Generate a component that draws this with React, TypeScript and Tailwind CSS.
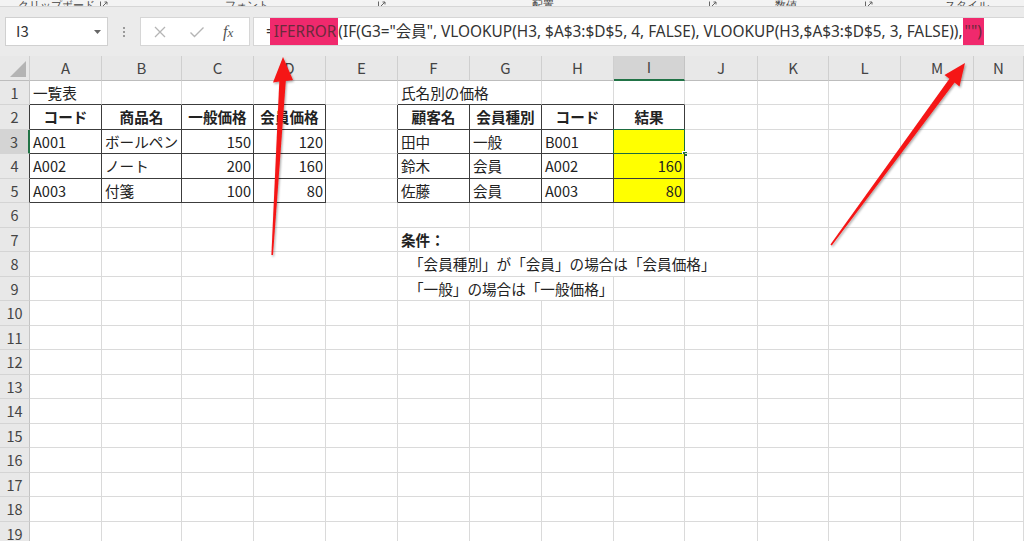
import React from "react";

const COLS = ["A", "B", "C", "D", "E", "F", "G", "H", "I", "J", "K", "L", "M", "N"];
const ROWS = Array.from({ length: 19 }, (_, i) => i + 1);

interface Cell {
  text?: string;
  align?: "left" | "center" | "right";
  bold?: boolean;
  fill?: boolean;
  span?: number;
  indent?: boolean;
  selected?: boolean;
}

const cells: Record<string, Cell> = {
  A1: { text: "一覧表" },
  A2: { text: "コード", bold: true, align: "center" },
  B2: { text: "商品名", bold: true, align: "center" },
  C2: { text: "一般価格", bold: true, align: "center" },
  D2: { text: "会員価格", bold: true, align: "center" },
  A3: { text: "A001" },
  B3: { text: "ボールペン" },
  C3: { text: "150", align: "right" },
  D3: { text: "120", align: "right" },
  A4: { text: "A002" },
  B4: { text: "ノート" },
  C4: { text: "200", align: "right" },
  D4: { text: "160", align: "right" },
  A5: { text: "A003" },
  B5: { text: "付箋" },
  C5: { text: "100", align: "right" },
  D5: { text: "80", align: "right" },
  F1: { text: "氏名別の価格", span: 2 },
  F2: { text: "顧客名", bold: true, align: "center" },
  G2: { text: "会員種別", bold: true, align: "center" },
  H2: { text: "コード", bold: true, align: "center" },
  I2: { text: "結果", bold: true, align: "center" },
  F3: { text: "田中" },
  G3: { text: "一般" },
  H3: { text: "B001" },
  I3: { text: "", fill: true, selected: true },
  F4: { text: "鈴木" },
  G4: { text: "会員" },
  H4: { text: "A002" },
  I4: { text: "160", align: "right", fill: true },
  F5: { text: "佐藤" },
  G5: { text: "会員" },
  H5: { text: "A003" },
  I5: { text: "80", align: "right", fill: true },
  F7: { text: "条件：", bold: true },
  F8: { text: "「会員種別」が「会員」の場合は「会員価格」", span: 5, indent: true },
  F9: { text: "「一般」の場合は「一般価格」", span: 3, indent: true },
};

const spanClass: Record<number, string> = {
  1: "",
  2: "col-span-2",
  3: "col-span-3",
  5: "col-span-5",
};

// A2:D5 and F2:I5 have dark borders
const inTable = (c: number, r: number) =>
  r >= 2 && r <= 5 && ((c >= 0 && c <= 3) || (c >= 5 && c <= 8));

const cellFont = "font-['Noto_Sans_CJK_JP','Noto_Sans',sans-serif]";

const Launcher = () => (
  <svg width="8" height="8" viewBox="0 0 8 8" className="block">
    <path d="M0.5 0.5 V7.5 H7.5" fill="none" stroke="#666" strokeWidth="1" />
    <path d="M3 5 L7 1 M4.5 1 H7 V3.5" fill="none" stroke="#666" strokeWidth="1" />
  </svg>
);

const RibbonLabels = () => {
  const seg = "shrink-0 flex items-end h-full overflow-visible";
  return (
    <div className="h-[7px] bg-[#f3f3f3] border-b border-[#d6d6d6] overflow-hidden flex text-[11px] leading-[11px] text-[#444]">
      <div className={`${seg} w-[18px]`} />
      <div className={`${seg} w-[82px]`}>
        <span className="mb-[-4px] whitespace-nowrap">クリップボード</span>
      </div>
      <div className={`${seg} w-[125px]`}>
        <span className="mb-[-3px]"><Launcher /></span>
      </div>
      <div className={`${seg} w-[153px]`}>
        <span className="mb-[-4px] whitespace-nowrap">フォント</span>
      </div>
      <div className={`${seg} w-[154px]`}>
        <span className="mb-[-3px]"><Launcher /></span>
      </div>
      <div className={`${seg} w-[177px]`}>
        <span className="mb-[-4px] whitespace-nowrap">配置</span>
      </div>
      <div className={`${seg} w-[66px]`}>
        <span className="mb-[-3px]"><Launcher /></span>
      </div>
      <div className={`${seg} w-[90px]`}>
        <span className="mb-[-4px] whitespace-nowrap">数値</span>
      </div>
      <div className={`${seg} w-[80px]`}>
        <span className="mb-[-3px]"><Launcher /></span>
      </div>
      <div className={`${seg} w-[79px]`}>
        <span className="mb-[-4px] whitespace-nowrap">スタイル</span>
      </div>
    </div>
  );
};

const FormulaBar = () => (
  <div className="h-[49px] bg-[#ebebeb] flex items-start pt-[10px]">
    <div className="ml-[5px] w-[103px] h-[29px] bg-white border border-[#d0d0d0] flex items-center justify-between pl-[10px] pr-[6px]">
      <span className={`${cellFont} text-[15px] text-[#333]`}>I3</span>
      <svg width="7" height="4" viewBox="0 0 7 4">
        <path d="M0 0 H7 L3.5 4 Z" fill="#666" />
      </svg>
    </div>
    <div className="w-[32px] h-[29px] flex items-center justify-center">
      <div className="flex flex-col gap-[2px]">
        <span className="w-[2px] h-[2px] bg-[#9a9a9a]" />
        <span className="w-[2px] h-[2px] bg-[#9a9a9a]" />
        <span className="w-[2px] h-[2px] bg-[#9a9a9a]" />
      </div>
    </div>
    <div className="w-[110px] h-[29px] bg-white border border-[#d6d6d6] flex items-center">
      <svg width="14" height="14" viewBox="0 0 14 14" className="ml-[12px]">
        <path d="M2 2 L12 12 M12 2 L2 12" stroke="#b5b5b5" strokeWidth="1.3" />
      </svg>
      <svg width="16" height="14" viewBox="0 0 16 14" className="ml-[22px]">
        <path d="M1.5 7.5 L5.5 11.5 L14.5 2.5" fill="none" stroke="#b5b5b5" strokeWidth="1.4" />
      </svg>
      <span className="ml-[18px] font-['Liberation_Serif',serif] italic text-[16px] text-[#555] leading-none">
        f<span className="text-[13px]">x</span>
      </span>
    </div>
    <div className="ml-[3px] flex-1 h-[29px] bg-white border-y border-l border-[#d6d6d6] flex items-stretch pl-[12px] font-['Noto_Sans','Noto_Sans_CJK_JP',sans-serif] text-[15.4px] text-[#333] whitespace-nowrap">
      <span className="flex items-center">=</span>
      <span className="flex items-center bg-[#f0296d] text-[#6b2a3c] ml-[-5px] pl-[4px] pr-[2px]">IFERROR</span>
      <span className="flex items-center">
        (IF(G3="会員", VLOOKUP(H3, $A$3:$D$5, 4, FALSE), VLOOKUP(H3,$A$3:$D$5, 3, FALSE)),
      </span>
      <span className="flex items-center bg-[#f0296d] text-[#6b2a3c] px-[2px]">"")</span>
    </div>
  </div>
);

const Grid = () => {
  const headerCell =
    "bg-[#e8e8e8] border-r border-b border-r-[#cfcfcf] border-b-[#bdbdbd] flex items-center justify-center text-[15px] text-[#444]";
  return (
    <div
      className={`${cellFont} grid grid-cols-[30px_72px_80px_72px_72px_72px_72px_72px_72px_71px_73px_71px_72px_73px_50px] grid-rows-[25px_24px_25px_24px_25px_24px_25px_24px_25px_24px_25px_24px_25px_24px_25px_24px_25px_24px_25px_24px]`}
    >
      {/* corner */}
      <div className="bg-[#e8e8e8] border-r border-b border-r-[#cfcfcf] border-b-[#bdbdbd] relative">
        <svg width="16" height="16" viewBox="0 0 16 16" className="absolute right-[3px] bottom-[3px]">
          <path d="M16 0 V16 H0 Z" fill="#b4b4b4" />
        </svg>
      </div>
      {COLS.map((col) =>
        col === "I" ? (
          <div
            key={col}
            className="bg-[#d4d4d4] border-r border-b-2 border-r-[#c4c4c4] border-b-[#217346] flex items-center justify-center text-[15px] text-[#444]"
          >
            {col}
          </div>
        ) : (
          <div key={col} className={headerCell}>
            {col}
          </div>
        )
      )}

      {ROWS.map((r) => {
        const out: React.ReactNode[] = [];
        const rowHeadBorder =
          r === 3
            ? "border-r-2 border-r-[#217346] bg-[#d4d4d4]"
            : r >= 2 && r <= 5
            ? "border-r border-r-[#3c3c3c] bg-[#e8e8e8]"
            : "border-r border-r-[#c4c4c4] bg-[#e8e8e8]";
        out.push(
          <div
            key={`h${r}`}
            className={`${rowHeadBorder} border-b border-b-[#d4d4d4] flex items-center justify-center text-[14.5px] text-[#444]`}
          >
            {r}
          </div>
        );
        let c = 0;
        while (c < COLS.length) {
          const id = `${COLS[c]}${r}`;
          const cell = cells[id] || {};
          const span = cell.span || 1;
          const last = c + span - 1;
          const darkRight = inTable(last, r) || inTable(last + 1, r);
          const darkBottom = inTable(c, r) || inTable(c, r + 1);
          const align =
            cell.align === "right"
              ? "justify-end pr-[2px]"
              : cell.align === "center"
              ? "justify-center"
              : "justify-start pl-[3px]";
          out.push(
            <div
              key={id}
              className={[
                "relative flex items-center whitespace-nowrap border-r border-b text-[14.6px] text-[#222]",
                spanClass[span],
                darkRight ? "border-r-[#3c3c3c]" : "border-r-[#dadada]",
                darkBottom ? "border-b-[#3c3c3c]" : "border-b-[#dadada]",
                cell.fill ? "bg-[#ffff00]" : "",
                cell.bold ? "font-bold" : "",
                cell.indent ? "pl-[11px]" : "",
                align,
              ].join(" ")}
            >
              {cell.text}
              {cell.selected && (
                <>
                  <div className="absolute inset-[-1px] border border-[#1d6b3f]" />
                  <div className="absolute right-[-4px] bottom-[-4px] w-[6px] h-[6px] bg-[#217346] border border-white" />
                </>
              )}
            </div>
          );
          c += span;
        }
        return out;
      })}
    </div>
  );
};

const Arrows = () => (
  <svg
    className="absolute left-0 top-0 pointer-events-none"
    width="1024"
    height="541"
    viewBox="0 0 1024 541"
  >
    <defs>
      <filter id="arrowShadow" x="-20%" y="-20%" width="140%" height="140%">
        <feDropShadow dx="1" dy="1.5" stdDeviation="1.2" floodColor="#000" floodOpacity="0.35" />
      </filter>
    </defs>
    <polygon
      points="283,57 293,80 285.8,81 273,255 271.4,255 279.3,81.5 273,82.5"
      fill="#f51616"
      filter="url(#arrowShadow)"
    />
    <polygon
      points="965,63 959.5,86.5 954.6,82.6 831.8,245.6 830.4,244.6 949.4,78.8 944.5,75"
      fill="#f51616"
      filter="url(#arrowShadow)"
    />
  </svg>
);

export default function App() {
  return (
    <div className="w-[1024px] h-[541px] overflow-hidden relative bg-white">
      <RibbonLabels />
      <FormulaBar />
      <Grid />
      <Arrows />
    </div>
  );
}
